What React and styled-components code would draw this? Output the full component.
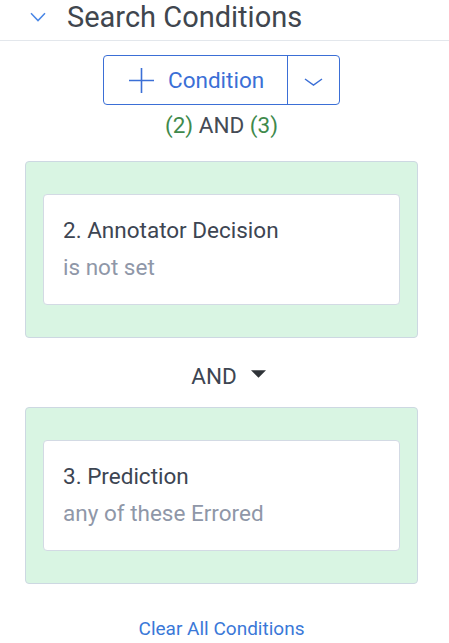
import styled, { createGlobalStyle } from 'styled-components';

const GlobalStyle = createGlobalStyle`
  html, body {
    margin: 0;
    padding: 0;
    background: #ffffff;
  }
  body {
    font-family: Roboto, "Liberation Sans", sans-serif;
  }
`;

const conditions = [
  { id: 2, name: 'Annotator Decision', detail: 'is not set' },
  { id: 3, name: 'Prediction', detail: 'any of these Errored' },
];

function App() {
  return (
    <Panel>
      <GlobalStyle />
      <Header>
        <HeaderIcon viewBox="0 0 16 10">
          <path d="M1 1.2 L8 8.6 L15 1.2" />
        </HeaderIcon>
        <HeaderTitle>Search Conditions</HeaderTitle>
      </Header>
      <Body>
        <SplitButton>
          <MainAction>
            <svg width="25" height="25" viewBox="0 0 25 25">
              <path d="M12.5 0 V25 M0 12.5 H25" stroke="#3b6fd6" strokeWidth="1.6" fill="none" />
            </svg>
            Condition
          </MainAction>
          <MenuAction>
            <svg width="19" height="8" viewBox="0 0 19 8">
              <path d="M1 1 L9.5 7 L18 1" stroke="#3b6fd6" strokeWidth="1.5" fill="none" />
            </svg>
          </MenuAction>
        </SplitButton>
        <Summary>
          <Ref>(2)</Ref> AND <Ref>(3)</Ref>
        </Summary>
        <Group>
          <Card>
            <CardTitle>{conditions[0].id}. {conditions[0].name}</CardTitle>
            <CardDetail>{conditions[0].detail}</CardDetail>
          </Card>
        </Group>
        <Operator>
          AND
          <Caret viewBox="0 0 16 8">
            <path d="M0 0 H16 L8 8 Z" />
          </Caret>
        </Operator>
        <Group>
          <Card>
            <CardTitle>{conditions[1].id}. {conditions[1].name}</CardTitle>
            <CardDetail>{conditions[1].detail}</CardDetail>
          </Card>
        </Group>
        <ClearLink>Clear All Conditions</ClearLink>
      </Body>
    </Panel>
  );
}

export default App;

const Panel = styled.div`
  width: 449px;
  display: flex;
  flex-direction: column;
`;

const Header = styled.div`
  height: 40px;
  display: flex;
  align-items: flex-start;
  border-bottom: 1px solid #e3e7ec;
`;

const HeaderIcon = styled.svg`
  width: 16px;
  height: 10px;
  margin: 12px 21px 0 30px;
  fill: none;
  stroke: #4a87e6;
  stroke-width: 1.5;
`;

const HeaderTitle = styled.span`
  font-size: 29px;
  line-height: 34px;
  color: #40464e;
`;

const Body = styled.div`
  width: 443px;
  box-sizing: border-box;
  padding: 14px 25px 0;
  display: flex;
  flex-direction: column;
  align-items: center;
`;

const SplitButton = styled.div`
  width: 237px;
  height: 50px;
  box-sizing: border-box;
  border: 1.5px solid #3b6fd6;
  border-radius: 4px;
  display: flex;
`;

const MainAction = styled.div`
  flex: 1;
  display: flex;
  align-items: center;
  gap: 14px;
  padding-left: 25px;
  font-size: 22.5px;
  color: #3b6fd6;
  border-right: 1.5px solid #3b6fd6;
`;

const MenuAction = styled.div`
  width: 51px;
  display: flex;
  align-items: center;
  justify-content: center;
  padding-top: 4px;
`;

const Summary = styled.div`
  margin-top: 7px;
  font-size: 22.5px;
  line-height: 26px;
  color: #454b55;
`;

const Ref = styled.span`
  color: #3f8a4c;
`;

const Group = styled.div`
  width: 393px;
  box-sizing: border-box;
  margin-top: 23px;
  padding: 32px 17px;
  background: #d9f5e3;
  border: 1px solid #cdd8e2;
  border-radius: 4px;
`;

const Card = styled.div`
  height: 111px;
  box-sizing: border-box;
  padding: 17px 19px 0;
  background: #ffffff;
  border: 1px solid #d3dae4;
  border-radius: 4px;
`;

const CardTitle = styled.div`
  font-size: 22.5px;
  line-height: 37px;
  color: #3d4552;
`;

const CardDetail = styled.div`
  font-size: 22.5px;
  line-height: 37px;
  color: #8f97a8;
`;

const Operator = styled.div`
  margin-top: 25px;
  margin-bottom: -5px;
  display: flex;
  align-items: center;
  gap: 14px;
  padding-left: 14px;
  font-size: 22.5px;
  line-height: 26px;
  color: #3d4552;
`;

const Caret = styled.svg`
  width: 15px;
  height: 8px;
  fill: #2f3338;
  margin-top: -5px;
`;

const ClearLink = styled.a`
  margin-top: 33px;
  font-size: 19px;
  line-height: 24px;
  color: #3a78d8;
  cursor: pointer;
`;
